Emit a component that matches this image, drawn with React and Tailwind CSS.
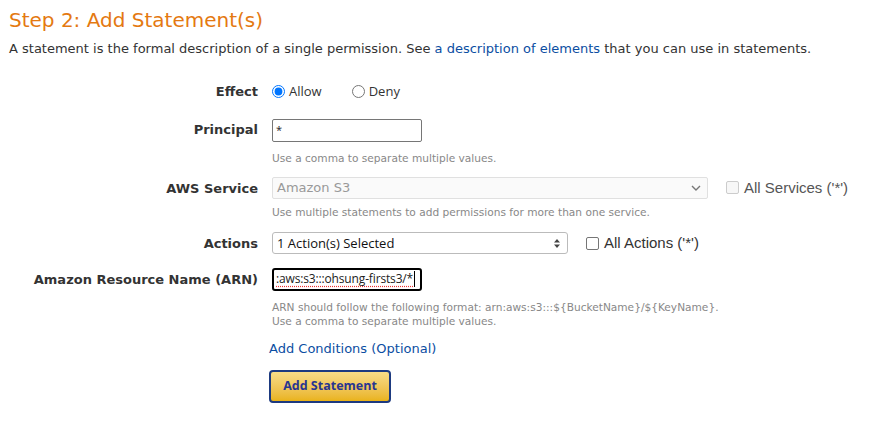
import React, { useState } from "react";

const verdana = "font-['DejaVu_Sans',Verdana,sans-serif]";
const segoe = "font-['Open_Sans','Noto_Sans',sans-serif]";
const arial = "font-['Liberation_Sans',Arial,sans-serif]";

const Label = ({ children }) => (
  <div className={`w-[249px] shrink-0 text-right text-[13px] font-bold text-[#333] ${verdana}`}>
    {children}
  </div>
);

const Help = ({ children }) => (
  <div className={`text-[10.6px] leading-[14px] text-[#888] ${verdana}`}>{children}</div>
);

const App = () => {
  const [effect, setEffect] = useState("allow");

  return (
    <div className="min-h-[432px] w-[869px] bg-white px-[9px] text-[#333]">
      <h2 className={`pt-[6px] text-[20px] leading-[28px] text-[#e47911] ${verdana}`}>
        Step 2: Add Statement(s)
      </h2>
      <p className={`mt-[6px] text-[13px] leading-[18px] ${verdana}`}>
        A statement is the formal description of a single permission. See{" "}
        <a className="text-[#0b4ea2]">a description of elements</a> that you can use in
        statements.
      </p>

      {/* Effect */}
      <div className="mt-[24px] flex items-center gap-[14px]">
        <Label>Effect</Label>
        <div className={`flex items-center text-[13px] ${segoe}`}>
          <label className="flex items-center gap-[4px]">
            <input
              type="radio"
              className="m-0 h-[13px] w-[13px]"
              checked={effect === "allow"}
              onChange={() => setEffect("allow")}
            />
            Allow
          </label>
          <label className="ml-[30px] flex items-center gap-[4px]">
            <input
              type="radio"
              className="m-0 h-[13px] w-[13px]"
              checked={effect === "deny"}
              onChange={() => setEffect("deny")}
            />
            Deny
          </label>
        </div>
      </div>

      {/* Principal */}
      <div className="mt-[17px] flex gap-[14px]">
        <div className="pt-[1px]">
          <Label>Principal</Label>
        </div>
        <div>
          <div className="flex h-[23px] w-[150px] items-center rounded-[2px] border border-[#767676] px-[3px] text-[11px] text-[#333]">
            *
          </div>
          <div className="mt-[9px]">
            <Help>Use a comma to separate multiple values.</Help>
          </div>
        </div>
      </div>

      {/* AWS Service */}
      <div className="mt-[12px] flex gap-[14px]">
        <div className="pt-[2px]">
          <Label>AWS Service</Label>
        </div>
        <div>
          <div className="flex items-center">
            <div
              className={`flex h-[22px] w-[436px] items-center justify-between rounded-[2px] border border-[#e0e0e0] bg-[#fafafa] pl-[4px] pr-[6px] text-[13px] text-[#999] ${verdana}`}
            >
              Amazon S3
              <svg width="10" height="6" viewBox="0 0 10 6" fill="none">
                <path d="M1 1l4 4 4-4" stroke="#777" strokeWidth="1.4" />
              </svg>
            </div>
            <label className={`ml-[18px] flex items-center gap-[5px] text-[15px] text-[#555] ${arial}`}>
              <span className="h-[13px] w-[13px] rounded-[2px] border border-[#ccc] bg-[#f7f7f7]" />
              All Services ('*')
            </label>
          </div>
          <div className="mt-[6px]">
            <Help>Use multiple statements to add permissions for more than one service.</Help>
          </div>
        </div>
      </div>

      {/* Actions */}
      <div className="mt-[13px] flex items-center gap-[14px]">
        <Label>Actions</Label>
        <div className="flex items-center">
          <div
            className={`flex h-[22px] w-[296px] items-center justify-between rounded-[3px] border border-[#bbb] bg-white pl-[4px] pr-[7px] text-[13px] text-[#111] ${segoe}`}
          >
            1 Action(s) Selected
            <svg width="6" height="9" viewBox="0 0 6 9">
              <path d="M3 0l3 3.5H0z M3 9l3-3.5H0z" fill="#444" />
            </svg>
          </div>
          <label className={`ml-[18px] flex items-center gap-[5px] text-[15px] text-[#333] ${arial}`}>
            <span className="h-[13px] w-[13px] rounded-[2px] border border-[#767676] bg-white" />
            All Actions ('*')
          </label>
        </div>
      </div>

      {/* ARN */}
      <div className="mt-[13px] flex gap-[14px]">
        <div className="pt-[2px]">
          <Label>Amazon Resource Name (ARN)</Label>
        </div>
        <div>
          <div
            className={`flex h-[23px] w-[150px] items-center overflow-hidden rounded-[3px] border-2 border-black px-[2px] text-[12px] tracking-[-0.15px] text-[#222] ${segoe}`}
          >
            <span className="whitespace-nowrap underline decoration-[#e33] decoration-dotted underline-offset-[3px]">
              :aws:s3:::ohsung-firsts3/*
            </span>
            <span className="ml-[1px] h-[16px] w-px shrink-0 bg-black" />
          </div>
          <div className="mt-[9px]">
            <Help>ARN should follow the following format: arn:aws:s3:::${"{BucketName}"}/${"{KeyName}"}.</Help>
            <Help>Use a comma to separate multiple values.</Help>
          </div>
        </div>
      </div>

      <div className="ml-[260px] mt-[7px]">
        <a className={`text-[13px] text-[#0b4ea2] ${verdana}`}>Add Conditions (Optional)</a>
        <div className="mt-[11px]">
          <button
            className={`h-[33px] w-[122px] rounded-[4px] border-2 border-[#1d3a80] bg-gradient-to-b from-[#f8dc86] to-[#e9b317] text-[12.5px] font-bold text-[#283591] ${segoe}`}
          >
            Add Statement
          </button>
        </div>
      </div>
    </div>
  );
};

export default App;
